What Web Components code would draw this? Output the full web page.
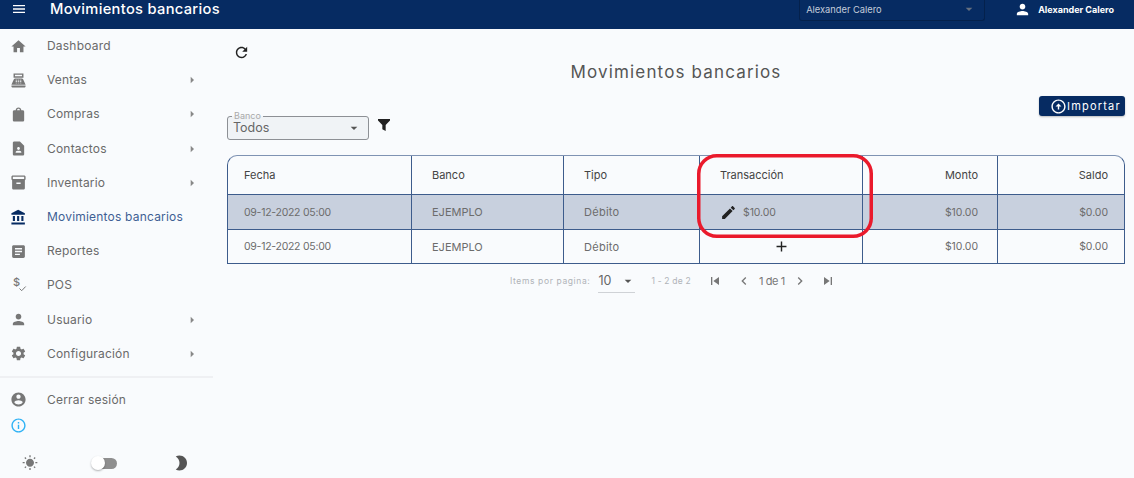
<!DOCTYPE html>
<html lang="es">
<head>
<meta charset="utf-8">
<title>Movimientos bancarios</title>
<style>
  html, body { margin: 0; height: 100%; background: #f9fbfd; overflow: hidden; }
  body { font-family: Inter, "Liberation Sans", sans-serif; color: #666; }
</style>
</head>
<body>
<app-shell></app-shell>
<script>
const ICONS = {
  menu: 'M3 18h18v-2H3v2zm0-5h18v-2H3v2zm0-7v2h18V6H3z',
  home: 'M10 20v-6h4v6h5v-8h3L12 3 2 12h3v8z',
  pos: 'M5 2h14v6H5zM7 4v2h10V4zM2 19h20v1c0 1.1-.9 2-2 2H4c-1.1 0-2-.9-2-2zM7.3 9h9.4c.8 0 1.5.47 1.83 1.19L22 18H2l3.47-7.81C5.79 9.47 6.51 9 7.3 9zM8 11v1h2v-1zm3 0v1h2v-1zm3 0v1h2v-1zM8 13v1h2v-1zm3 0v1h2v-1zm3 0v1h2v-1zM8 15v1h2v-1zm3 0v1h2v-1zm3 0v1h2v-1z',
  bag: 'M18 6h-2c0-2.21-1.79-4-4-4S8 3.79 8 6H6c-1.1 0-2 .9-2 2v12c0 1.1.9 2 2 2h12c1.1 0 2-.9 2-2V8c0-1.1-.9-2-2-2zm-6-2c1.1 0 2 .9 2 2h-4c0-1.1.9-2 2-2z',
  contact: 'M14 2H6c-1.1 0-2 .9-2 2v16c0 1.1.9 2 2 2h12c1.1 0 2-.9 2-2V8l-6-6zm-2 8c1.1 0 2 .9 2 2s-.9 2-2 2-2-.9-2-2 .9-2 2-2zm4 8H8v-.57c0-.81.48-1.53 1.22-1.85.85-.37 1.79-.58 2.78-.58.99 0 1.93.21 2.78.58.74.32 1.22 1.04 1.22 1.85V18z',
  inventory: 'M20 2H4c-1 0-2 .9-2 2v3.01c0 .72.43 1.34 1 1.69V20c0 1.1 1.1 2 2 2h14c.9 0 2-.9 2-2V8.7c.57-.35 1-.97 1-1.69V4c0-1.1-1-2-2-2zm-5 12H9v-2h6v2zm5-7H4V4h16v3z',
  bank: 'M4 10v7h3v-7H4zm6 0v7h3v-7h-3zM2 22h19v-3H2v3zm14-12v7h3v-7h-3zm-4.5-9L2 6v2h19V6l-9.5-5z',
  article: 'M19 3H5c-1.1 0-2 .9-2 2v14c0 1.1.9 2 2 2h14c1.1 0 2-.9 2-2V5c0-1.1-.9-2-2-2zm-5 14H7v-2h7v2zm3-4H7v-2h10v2zm0-4H7V7h10v2z',
  person: 'M12 12c2.21 0 4-1.79 4-4s-1.79-4-4-4-4 1.79-4 4 1.79 4 4 4zm0 2c-2.67 0-8 1.34-8 4v2h16v-2c0-2.66-5.33-4-8-4z',
  settings: 'M19.14 12.94c.04-.3.06-.61.06-.94 0-.32-.02-.64-.07-.94l2.03-1.58c.18-.14.23-.41.12-.61l-1.92-3.32c-.12-.22-.37-.29-.59-.22l-2.39.96c-.5-.38-1.03-.7-1.62-.94l-.36-2.54c-.04-.24-.24-.41-.48-.41h-3.84c-.24 0-.43.17-.47.41l-.36 2.54c-.59.24-1.13.57-1.62.94l-2.39-.96c-.22-.08-.47 0-.59.22L2.74 8.87c-.12.21-.08.47.12.61l2.03 1.58c-.05.3-.09.63-.09.94s.02.64.07.94l-2.03 1.58c-.18.14-.23.41-.12.61l1.92 3.32c.12.22.37.29.59.22l2.39-.96c.5.38 1.03.7 1.62.94l.36 2.54c.05.24.24.41.48.41h3.84c.24 0 .44-.17.47-.41l.36-2.54c.59-.24 1.13-.56 1.62-.94l2.39.96c.22.08.47 0 .59-.22l1.92-3.32c.12-.22.07-.47-.12-.61l-2.01-1.58zM12 15.6c-1.98 0-3.6-1.62-3.6-3.6s1.62-3.6 3.6-3.6 3.6 1.62 3.6 3.6-1.62 3.6-3.6 3.6z',
  account: 'M12 2C6.48 2 2 6.48 2 12s4.48 10 10 10 10-4.48 10-10S17.52 2 12 2zm0 3c1.66 0 3 1.34 3 3s-1.34 3-3 3-3-1.34-3-3 1.34-3 3-3zm0 14.2c-2.5 0-4.71-1.28-6-3.22.03-1.99 4-3.08 6-3.08 1.99 0 5.97 1.09 6 3.08-1.29 1.94-3.5 3.22-6 3.22z',
  info: 'M11 7h2v2h-2zm0 4h2v6h-2zm1-9C6.48 2 2 6.48 2 12s4.48 10 10 10 10-4.48 10-10S17.52 2 12 2zm0 18c-4.41 0-8-3.59-8-8s3.59-8 8-8 8 3.59 8 8-3.59 8-8 8z',
  sun: 'M6.76 4.84l-1.8-1.79-1.41 1.41 1.79 1.79 1.42-1.41zM4 10.5H1v2h3v-2zm9-9.95h-2V3.5h2V.55zm7.45 3.91l-1.41-1.41-1.79 1.79 1.41 1.41 1.79-1.79zm-3.21 13.7l1.79 1.8 1.41-1.41-1.8-1.79-1.4 1.4zM20 10.5v2h3v-2h-3zm-8-5c-3.31 0-6 2.69-6 6s2.69 6 6 6 6-2.69 6-6-2.69-6-6-6zm-1 16.95h2V19.5h-2v2.95zm-7.45-3.91l1.41 1.41 1.79-1.8-1.41-1.41-1.79 1.8z',
  moon: 'M10 2c-1.82 0-3.53.5-5 1.35C7.99 5.08 10 8.3 10 12s-2.01 6.92-5 8.65C6.47 21.5 8.18 22 10 22c5.52 0 10-4.48 10-10S15.52 2 10 2z',
  refresh: 'M17.65 6.35C16.2 4.9 14.21 4 12 4c-4.42 0-7.99 3.58-7.99 8s3.57 8 7.99 8c3.73 0 6.84-2.55 7.73-6h-2.08c-.82 2.33-3.04 4-5.65 4-3.31 0-6-2.69-6-6s2.69-6 6-6c1.66 0 3.14.69 4.22 1.78L13 11h7V4l-2.35 2.35z',
  filter: 'M3 3h18v2.2L14.5 12v9l-5-2.6V12L3 5.2z',
  edit: 'M3 17.25V21h3.75L17.81 9.94l-3.75-3.75L3 17.25zM20.71 7.04c.39-.39.39-1.02 0-1.41l-2.34-2.34c-.39-.39-1.02-.39-1.41 0l-1.83 1.83 3.75 3.75 1.83-1.83z',
  add: 'M19 13h-6v6h-2v-6H5v-2h6V5h2v6h6v2z',
  upload: 'M12 4c4.41 0 8 3.59 8 8s-3.59 8-8 8-8-3.59-8-8 3.59-8 8-8m0-2C6.48 2 2 6.48 2 12s4.48 10 10 10 10-4.48 10-10S17.52 2 12 2zm0 5.6L7.8 12H11v4.4h2V12h3.2z',
  first: 'M6 6h2v12H6zm3.5 6l8.5 6V6z',
  last: 'M6 18l8.5-6L6 6v12zM16 6v12h2V6h-2z',
  prev: 'M15.41 7.41L14 6l-6 6 6 6 1.41-1.41L10.83 12z',
  next: 'M10 6L8.59 7.41 13.17 12l-4.58 4.59L10 18l6-6z',
  down: 'M7 10l5 5 5-5z',
  right: 'M10 7l5 5-5 5z'
}

/**
 * Inline material style icon.
 */
class AppIcon extends HTMLElement {
  connectedCallback () {
    const size = this.getAttribute('size') || 16
    const root = this.attachShadow({ mode: 'open' })
    root.innerHTML = `
      <style>
        :host { display: inline-flex; flex: none; color: inherit; }
        svg { display: block; fill: currentColor; }
      </style>
      <svg width="${size}" height="${size}" viewBox="0 0 24 24"><path d="${ICONS[this.getAttribute('name')]}"/></svg>
    `
  }
}
customElements.define('app-icon', AppIcon)

/**
 * Top bar with the page name, the company select and the user.
 */
class TopBar extends HTMLElement {
  constructor () {
    super()
    this.attachShadow({ mode: 'open' }).innerHTML = `
      <style>
        :host { display: flex; align-items: flex-start; height: 29px; background: #062b62; color: #fff; flex: none; }
        .menu { display: flex; width: 50px; height: 29px; align-items: flex-start; padding: 1px 0 0 11px; box-sizing: border-box; }
        h1 { flex: 1; margin: 0; font-size: 14.7px; line-height: 19px; font-weight: 500; letter-spacing: .3px; }
        .select { display: flex; justify-content: space-between; align-items: center; box-sizing: border-box; width: 186px; height: 21px; padding: 0 7px 2px 6px; margin-right: 29px; border: 1px solid #04214c; border-top: 0; border-radius: 0 0 3px 3px; font-size: 9.3px; color: #c3ccda; }
        .select app-icon { color: #66707f; }
        .user { display: flex; align-items: center; height: 18px; margin-right: 20px; font-size: 9px; font-weight: 700; gap: 7px; }
      </style>
      <div class="menu"><app-icon name="menu" size="16"></app-icon></div>
      <h1>Movimientos bancarios</h1>
      <div class="select"><span>Alexander Calero</span><app-icon name="down" size="16"></app-icon></div>
      <div class="user"><app-icon name="person" size="17"></app-icon><span>Alexander Calero</span></div>
    `
  }
}
customElements.define('top-bar', TopBar)

/**
 * One row of the side menu.
 */
class NavItem extends HTMLElement {
  connectedCallback () {
    const active = this.hasAttribute('active')
    const arrow = this.hasAttribute('arrow') ? '<app-icon class="arrow" name="right" size="16"></app-icon>' : ''
    const icon = this.getAttribute('icon') === 'price'
      ? '<span class="price"><svg width="18" height="18" viewBox="0 0 18 18"><text x="3" y="10" font-size="11" font-weight="500" font-family="Inter, sans-serif" fill="currentColor">$</text><path d="M9.5 12.5l2.2 2.2 4-4.2" fill="none" stroke="currentColor" stroke-width="1"/></svg></span>'
      : `<app-icon name="${this.getAttribute('icon')}" size="17"></app-icon>`
    this.attachShadow({ mode: 'open' }).innerHTML = `
      <style>
        :host { display: flex; align-items: center; height: 34.2px; color: ${active ? '#3f5f94' : '#6a6a6a'}; font-size: 12px; letter-spacing: .2px; }
        .slot { display: flex; justify-content: center; width: 37px; margin-right: 10px; color: ${active ? '#062b62' : '#777'}; }
        .price { display: flex; }
        .label { flex: 1; margin-top: -1px; }
        .arrow { color: #888; margin-right: 14px; }
      </style>
      <span class="slot">${icon}</span>
      <span class="label"><slot></slot></span>
      ${arrow}
    `
  }
}
customElements.define('nav-item', NavItem)

/**
 * Side menu, with the theme switch at the bottom.
 */
class SideMenu extends HTMLElement {
  constructor () {
    super()
    this.attachShadow({ mode: 'open' }).innerHTML = `
      <style>
        :host { display: flex; flex-direction: column; width: 214px; flex: none; }
        hr { border: 0; height: 2px; background: #eff0f3; margin: 5px 1px 5px 0; }
        .info { display: flex; justify-content: center; width: 37px; color: #2fb2f5; margin-top: 0; }
        .theme { display: flex; align-items: center; justify-content: space-between; margin-top: 20px; padding: 0 23px 0 22px; width: 168px; box-sizing: content-box; color: #777; }
        .switch { position: relative; width: 25px; height: 11px; border-radius: 6px; background: #8f8f8f; margin-right: 2px; }
        .knob { position: absolute; left: -1px; top: -1.5px; width: 14px; height: 14px; border-radius: 50%; background: #fff; box-shadow: 0 1px 2px rgba(0,0,0,.3); }
        .moon { color: #555; }
      </style>
      <nav-item icon="home">Dashboard</nav-item>
      <nav-item icon="pos" arrow>Ventas</nav-item>
      <nav-item icon="bag" arrow>Compras</nav-item>
      <nav-item icon="contact" arrow>Contactos</nav-item>
      <nav-item icon="inventory" arrow>Inventario</nav-item>
      <nav-item icon="bank" active>Movimientos bancarios</nav-item>
      <nav-item icon="article">Reportes</nav-item>
      <nav-item icon="price">POS</nav-item>
      <nav-item icon="person" arrow>Usuario</nav-item>
      <nav-item icon="settings" arrow>Configuración</nav-item>
      <hr>
      <nav-item icon="account">Cerrar sesión</nav-item>
      <div class="info"><app-icon name="info" size="17"></app-icon></div>
      <div class="theme">
        <app-icon name="sun" size="16"></app-icon>
        <span class="switch"><span class="knob"></span></span>
        <app-icon class="moon" name="moon" size="18"></app-icon>
      </div>
    `
  }
}
customElements.define('side-menu', SideMenu)

/**
 * Outlined select with a floating label.
 */
class BankSelect extends HTMLElement {
  constructor () {
    super()
    this.attachShadow({ mode: 'open' }).innerHTML = `
      <style>
        :host { display: block; width: 142px; }
        fieldset { display: flex; box-sizing: border-box; height: 27px; margin: -3px 0 0; padding: 0 9px 0 5px; border: 1px solid #8d9095; border-radius: 3px; background: #f0f3f6; }
        legend { padding: 0 2px; margin-left: -1px; font-size: 9px; line-height: 6px; height: 6px; color: #aaa; }
        .row { display: flex; flex: 1; align-items: center; justify-content: space-between; margin-top: -3px; font-size: 12.5px; color: #666; }
        .row app-icon { color: #555; margin-right: -3px; }
      </style>
      <fieldset>
        <legend>Banco</legend>
        <div class="row"><span>Todos</span><app-icon name="down" size="16"></app-icon></div>
      </fieldset>
    `
  }
}
customElements.define('bank-select', BankSelect)

/**
 * Movements table with the red mark over the transaction column.
 */
class MovementsTable extends HTMLElement {
  constructor () {
    super()
    const cells = (shaded, icon) => `
      <tr class="${shaded ? 'shaded' : ''}" style="height:${shaded ? 35 : 34}px">
        <td class="date">09-12-2022 05:00</td><td class="bank">EJEMPLO</td><td>Débito</td>
        ${icon}
        <td class="num">$10.00</td><td class="num end">$0.00</td>
      </tr>`
    this.attachShadow({ mode: 'open' }).innerHTML = `
      <style>
        :host { display: block; position: relative; width: 898px; }
        table { width: 898px; height: 109px; table-layout: fixed; border-collapse: separate; border-spacing: 0; border: 1px solid #3d5c8c; border-top-color: #7f93b3; border-radius: 10px 10px 0 0; box-sizing: border-box; font-size: 11px; letter-spacing: .27px; }
        th, td { padding: 0 0 0 20px; text-align: left; font-weight: 400; border-left: 1px solid #3d5c8c; border-top: 1px solid #3d5c8c; color: #6c6c6c; box-sizing: border-box; }
        th { color: #444; border-top: 0; letter-spacing: 0; }
        th:first-child, td:first-child { border-left: 0; padding-left: 16px; }
        td.date { font-size: 10.5px; letter-spacing: -.27px; }
        td.bank { letter-spacing: 0; }
        .num { text-align: right; padding: 0 19px 0 0; }
        td.num { font-size: 10.5px; letter-spacing: -.05px; }
        .num.end { padding-right: 16px; }
        .shaded td { background: #c8d0de; }
        .tx { display: flex; align-items: center; gap: 6px; font-size: 10.5px; letter-spacing: -.1px; }
        .tx app-icon { color: #222; }
        .add { text-align: center; padding: 0; color: #222; }
        .add app-icon { vertical-align: middle; }
        .mark { position: absolute; left: 470px; top: -1px; pointer-events: none; display: block; }
      </style>
      <table>
        <colgroup><col style="width:183px"><col style="width:152px"><col style="width:136px"><col style="width:163px"><col style="width:135px"><col></colgroup>
        <tr style="height:38px">
          <th>Fecha</th><th>Banco</th><th>Tipo</th><th>Transacción</th><th class="num">Monto</th><th class="num end">Saldo</th>
        </tr>
        ${cells(true, '<td><div class="tx"><app-icon name="edit" size="17"></app-icon><span>$10.00</span></div></td>')}
        ${cells(false, '<td class="add"><app-icon name="add" size="17"></app-icon></td>')}
      </table>
      <svg class="mark" width="176" height="84" viewBox="0 0 176 84"><rect x="1.75" y="1.75" width="172.5" height="80.5" rx="18" fill="none" stroke="#ea1a2c" stroke-width="3.5"/></svg>
    `
  }
}
customElements.define('movements-table', MovementsTable)

/**
 * Table paginator.
 */
class TablePager extends HTMLElement {
  constructor () {
    super()
    this.attachShadow({ mode: 'open' }).innerHTML = `
      <style>
        :host { display: flex; align-items: center; height: 34px; padding-left: 283px; color: #b0b3b8; font-size: 8.5px; letter-spacing: .62px; }
        .size { display: flex; align-items: center; justify-content: space-between; box-sizing: border-box; width: 37px; height: 24px; margin: 0 16px 0 8px; border-bottom: 1px solid #cfd2d6; font-size: 12.5px; color: #666; letter-spacing: 0; }
        .size app-icon { color: #555; margin-right: -1px; }
        .range { letter-spacing: .2px; }
        .btn { color: #777; }
        .page { font-size: 11px; color: #777; letter-spacing: -.4px; margin: 0 7px; }
      </style>
      <span>Items por pagina:</span>
      <div class="size"><span>10</span><app-icon name="down" size="16"></app-icon></div>
      <span class="range">1 - 2 de 2</span>
      <app-icon class="btn" style="margin-left:16px" name="first" size="16"></app-icon>
      <app-icon class="btn" style="margin-left:13px" name="prev" size="16"></app-icon>
      <span class="page">1 de 1</span>
      <app-icon class="btn" name="next" size="16"></app-icon>
      <app-icon class="btn" style="margin-left:12px" name="last" size="16"></app-icon>
    `
  }
}
customElements.define('table-pager', TablePager)

/**
 * Content of the page.
 */
class BankMovements extends HTMLElement {
  constructor () {
    super()
    this.attachShadow({ mode: 'open' }).innerHTML = `
      <style>
        :host { display: flex; flex-direction: column; flex: 1; padding: 15px 9px 0 13px; min-width: 0; }
        .refresh { display: flex; height: 18px; color: #222; }
        h2 { margin: -1px 0 0; height: 35px; text-align: center; font-size: 17px; line-height: 22px; font-weight: 400; letter-spacing: 1.15px; color: #555; }
        .actions { display: flex; justify-content: flex-end; height: 20px; }
        button { display: flex; align-items: center; width: 86px; height: 20px; padding: 0 0 0 11px; border: 0; border-radius: 3px; background: #062b62; color: #fff; font: inherit; font-size: 11px; letter-spacing: 1.2px; box-shadow: 0 1px 2px rgba(0,0,0,.25); }
        .filters { display: flex; align-items: flex-start; gap: 7px; height: 24px; margin: 0 0 15px; }
        .funnel { color: #222; margin-top: 1px; }
        table-pager { margin-top: 0; }
      </style>
      <div class="refresh"><app-icon name="refresh" size="17" style="margin-left:6px"></app-icon></div>
      <h2>Movimientos bancarios</h2>
      <div class="actions"><button><app-icon name="upload" size="17"></app-icon>Importar</button></div>
      <div class="filters"><bank-select></bank-select><app-icon class="funnel" name="filter" size="16"></app-icon></div>
      <movements-table></movements-table>
      <table-pager></table-pager>
    `
  }
}
customElements.define('bank-movements', BankMovements)

/**
 * Whole page.
 */
class AppShell extends HTMLElement {
  constructor () {
    super()
    this.attachShadow({ mode: 'open' }).innerHTML = `
      <style>
        :host { display: flex; flex-direction: column; height: 478px; }
        .body { display: flex; flex: 1; min-height: 0; }
      </style>
      <top-bar></top-bar>
      <div class="body"><side-menu></side-menu><bank-movements></bank-movements></div>
    `
  }
}
customElements.define('app-shell', AppShell)
</script>
</body>
</html>
